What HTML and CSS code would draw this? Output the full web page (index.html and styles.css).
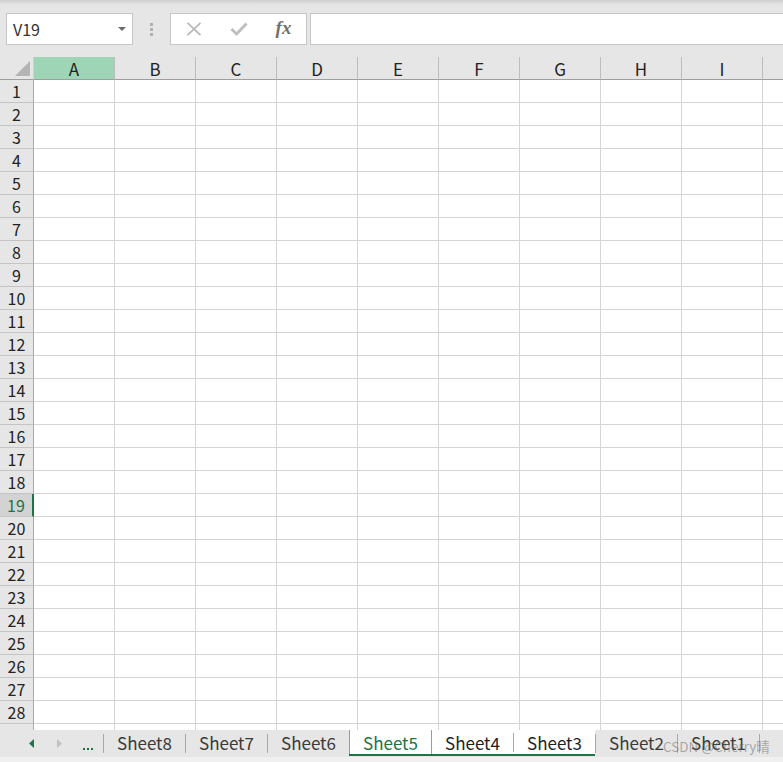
FILE: index.html
```html
<!DOCTYPE html>
<html>
<head>
<meta charset="utf-8">
<link rel="stylesheet" href="styles.css">
</head>
<body>
<div class="app">
  <div class="fbar">
    <div class="namebox"><span class="nb-text">V19</span><span class="nb-arrow"></span></div>
    <div class="grip"><i></i><i></i><i></i></div>
    <div class="controls">
      <span class="ctl"><svg width="16" height="14" viewBox="0 0 16 14"><path d="M1.5 0.8 L14.5 13.2 M14.5 0.8 L1.5 13.2" stroke="#b5b5b5" stroke-width="1.6" fill="none"/></svg></span>
      <span class="ctl"><svg width="18" height="14" viewBox="0 0 18 14"><path d="M1.5 7 L6.5 12 L16.5 1.5" stroke="#bdbdbd" stroke-width="2.8" fill="none"/></svg></span>
      <span class="ctl fx">fx</span>
    </div>
    <div class="finput"></div>
  </div>

  <div class="sheet">
    <div class="corner"><svg width="34" height="22" viewBox="0 0 34 22"><path d="M30 4 L30 19 L15 19 Z" fill="#b4b4b4"/></svg></div>
    <div class="ch sel">A</div><div class="ch">B</div><div class="ch">C</div><div class="ch">D</div><div class="ch">E</div><div class="ch">F</div><div class="ch">G</div><div class="ch">H</div><div class="ch">I</div><div class="ch"></div>

    <div class="rh">1</div><div class="c"></div><div class="c"></div><div class="c"></div><div class="c"></div><div class="c"></div><div class="c"></div><div class="c"></div><div class="c"></div><div class="c"></div><div class="c"></div>
    <div class="rh">2</div><div class="c"></div><div class="c"></div><div class="c"></div><div class="c"></div><div class="c"></div><div class="c"></div><div class="c"></div><div class="c"></div><div class="c"></div><div class="c"></div>
    <div class="rh">3</div><div class="c"></div><div class="c"></div><div class="c"></div><div class="c"></div><div class="c"></div><div class="c"></div><div class="c"></div><div class="c"></div><div class="c"></div><div class="c"></div>
    <div class="rh">4</div><div class="c"></div><div class="c"></div><div class="c"></div><div class="c"></div><div class="c"></div><div class="c"></div><div class="c"></div><div class="c"></div><div class="c"></div><div class="c"></div>
    <div class="rh">5</div><div class="c"></div><div class="c"></div><div class="c"></div><div class="c"></div><div class="c"></div><div class="c"></div><div class="c"></div><div class="c"></div><div class="c"></div><div class="c"></div>
    <div class="rh">6</div><div class="c"></div><div class="c"></div><div class="c"></div><div class="c"></div><div class="c"></div><div class="c"></div><div class="c"></div><div class="c"></div><div class="c"></div><div class="c"></div>
    <div class="rh">7</div><div class="c"></div><div class="c"></div><div class="c"></div><div class="c"></div><div class="c"></div><div class="c"></div><div class="c"></div><div class="c"></div><div class="c"></div><div class="c"></div>
    <div class="rh">8</div><div class="c"></div><div class="c"></div><div class="c"></div><div class="c"></div><div class="c"></div><div class="c"></div><div class="c"></div><div class="c"></div><div class="c"></div><div class="c"></div>
    <div class="rh">9</div><div class="c"></div><div class="c"></div><div class="c"></div><div class="c"></div><div class="c"></div><div class="c"></div><div class="c"></div><div class="c"></div><div class="c"></div><div class="c"></div>
    <div class="rh">10</div><div class="c"></div><div class="c"></div><div class="c"></div><div class="c"></div><div class="c"></div><div class="c"></div><div class="c"></div><div class="c"></div><div class="c"></div><div class="c"></div>
    <div class="rh">11</div><div class="c"></div><div class="c"></div><div class="c"></div><div class="c"></div><div class="c"></div><div class="c"></div><div class="c"></div><div class="c"></div><div class="c"></div><div class="c"></div>
    <div class="rh">12</div><div class="c"></div><div class="c"></div><div class="c"></div><div class="c"></div><div class="c"></div><div class="c"></div><div class="c"></div><div class="c"></div><div class="c"></div><div class="c"></div>
    <div class="rh">13</div><div class="c"></div><div class="c"></div><div class="c"></div><div class="c"></div><div class="c"></div><div class="c"></div><div class="c"></div><div class="c"></div><div class="c"></div><div class="c"></div>
    <div class="rh">14</div><div class="c"></div><div class="c"></div><div class="c"></div><div class="c"></div><div class="c"></div><div class="c"></div><div class="c"></div><div class="c"></div><div class="c"></div><div class="c"></div>
    <div class="rh">15</div><div class="c"></div><div class="c"></div><div class="c"></div><div class="c"></div><div class="c"></div><div class="c"></div><div class="c"></div><div class="c"></div><div class="c"></div><div class="c"></div>
    <div class="rh">16</div><div class="c"></div><div class="c"></div><div class="c"></div><div class="c"></div><div class="c"></div><div class="c"></div><div class="c"></div><div class="c"></div><div class="c"></div><div class="c"></div>
    <div class="rh">17</div><div class="c"></div><div class="c"></div><div class="c"></div><div class="c"></div><div class="c"></div><div class="c"></div><div class="c"></div><div class="c"></div><div class="c"></div><div class="c"></div>
    <div class="rh">18</div><div class="c"></div><div class="c"></div><div class="c"></div><div class="c"></div><div class="c"></div><div class="c"></div><div class="c"></div><div class="c"></div><div class="c"></div><div class="c"></div>
    <div class="rh rsel">19</div><div class="c"></div><div class="c"></div><div class="c"></div><div class="c"></div><div class="c"></div><div class="c"></div><div class="c"></div><div class="c"></div><div class="c"></div><div class="c"></div>
    <div class="rh">20</div><div class="c"></div><div class="c"></div><div class="c"></div><div class="c"></div><div class="c"></div><div class="c"></div><div class="c"></div><div class="c"></div><div class="c"></div><div class="c"></div>
    <div class="rh">21</div><div class="c"></div><div class="c"></div><div class="c"></div><div class="c"></div><div class="c"></div><div class="c"></div><div class="c"></div><div class="c"></div><div class="c"></div><div class="c"></div>
    <div class="rh">22</div><div class="c"></div><div class="c"></div><div class="c"></div><div class="c"></div><div class="c"></div><div class="c"></div><div class="c"></div><div class="c"></div><div class="c"></div><div class="c"></div>
    <div class="rh">23</div><div class="c"></div><div class="c"></div><div class="c"></div><div class="c"></div><div class="c"></div><div class="c"></div><div class="c"></div><div class="c"></div><div class="c"></div><div class="c"></div>
    <div class="rh">24</div><div class="c"></div><div class="c"></div><div class="c"></div><div class="c"></div><div class="c"></div><div class="c"></div><div class="c"></div><div class="c"></div><div class="c"></div><div class="c"></div>
    <div class="rh">25</div><div class="c"></div><div class="c"></div><div class="c"></div><div class="c"></div><div class="c"></div><div class="c"></div><div class="c"></div><div class="c"></div><div class="c"></div><div class="c"></div>
    <div class="rh">26</div><div class="c"></div><div class="c"></div><div class="c"></div><div class="c"></div><div class="c"></div><div class="c"></div><div class="c"></div><div class="c"></div><div class="c"></div><div class="c"></div>
    <div class="rh">27</div><div class="c"></div><div class="c"></div><div class="c"></div><div class="c"></div><div class="c"></div><div class="c"></div><div class="c"></div><div class="c"></div><div class="c"></div><div class="c"></div>
    <div class="rh">28</div><div class="c"></div><div class="c"></div><div class="c"></div><div class="c"></div><div class="c"></div><div class="c"></div><div class="c"></div><div class="c"></div><div class="c"></div><div class="c"></div>
    <div class="rh"></div><div class="c"></div><div class="c"></div><div class="c"></div><div class="c"></div><div class="c"></div><div class="c"></div><div class="c"></div><div class="c"></div><div class="c"></div><div class="c"></div>
  </div>

  <div class="tabbar">
    <div class="nav">
      <svg class="nav-l" width="5" height="9" viewBox="0 0 5 9"><path d="M5 0 L0 4.5 L5 9 Z" fill="#217346"/></svg>
      <svg class="nav-r" width="5" height="9" viewBox="0 0 5 9"><path d="M0 0 L5 4.5 L0 9 Z" fill="#c2c2c2"/></svg>
      <span class="more"><i></i><i></i><i></i></span>
    </div>
    <span class="sep"></span>
    <div class="tab">Sheet8</div><span class="sep"></span>
    <div class="tab">Sheet7</div><span class="sep"></span>
    <div class="tab">Sheet6</div>
    <div class="group">
      <div class="tab on active">Sheet5</div>
      <div class="tab on">Sheet4</div><span class="sep"></span>
      <div class="tab on">Sheet3</div>
    </div>
    <span class="sep"></span>
    <div class="tab">Sheet2</div><span class="sep"></span>
    <div class="tab">Sheet1</div><span class="sep"></span>
    <span class="watermark">CSDN @Cherry晴</span>
  </div>
  <div class="bottom"></div>
</div>
</body>
</html>
```

FILE: styles.css
```css
html, body {
  margin: 0;
  padding: 0;
  background: #e6e6e6;
}
.app {
  width: 783px;
  height: 762px;
  overflow: hidden;
  font-family: "Noto Sans CJK SC", "Noto Sans", sans-serif;
  color: #222;
  position: relative;
}
.fbar {
  height: 57px;
  box-sizing: border-box;
  padding: 13px 0 0 6px;
  display: flex;
  align-items: flex-start;
  background: linear-gradient(#cfcfcf 0px, #e2e2e2 4px, #e6e6e6 6px);
}
.namebox {
  width: 127px;
  height: 32px;
  box-sizing: border-box;
  border: 1px solid #c6c6c6;
  background: #fff;
  display: flex;
  align-items: center;
  padding-left: 6px;
}
.nb-text {
  font-size: 16px;
  color: #333;
  flex: 1;
  line-height: 1;
}
.nb-arrow {
  width: 0;
  height: 0;
  border-left: 4px solid transparent;
  border-right: 4px solid transparent;
  border-top: 4px solid #6a6a6a;
  margin-right: 6px;
}
.grip {
  width: 37px;
  height: 32px;
  display: flex;
  flex-direction: column;
  align-items: center;
  justify-content: center;
  gap: 2px;
}
.grip i {
  display: block;
  width: 3px;
  height: 3px;
  background: #b0b0b0;
}
.controls {
  width: 137px;
  height: 32px;
  box-sizing: border-box;
  border: 1px solid #c6c6c6;
  background: #fff;
  display: flex;
}
.ctl {
  width: 45px;
  display: flex;
  align-items: center;
  justify-content: center;
}
.fx {
  font-family: "Liberation Serif", "DejaVu Serif", serif;
  font-style: italic;
  font-weight: bold;
  font-size: 19px;
  color: #707070;
  padding-bottom: 2px;
}
.finput {
  margin-left: 3px;
  flex: 1;
  height: 32px;
  box-sizing: border-box;
  border: 1px solid #c6c6c6;
  border-right: none;
  background: #fff;
}
.sheet {
  height: 673px;
  overflow: hidden;
  display: grid;
  grid-template-columns: 34px repeat(10, 81px);
  grid-auto-rows: 23px;
  background: #fff;
}
.sheet > div {
  box-sizing: border-box;
}
.corner {
  background: #e6e6e6;
  border-bottom: 1px solid #9e9e9e;
  border-right: 1px solid #d0d0d0;
}
.corner svg {
  display: block;
}
.ch {
  background: #e6e6e6;
  border-right: 1px solid #bdbdbd;
  border-bottom: 1px solid #9e9e9e;
  display: flex;
  align-items: center;
  justify-content: center;
  font-size: 17px;
  line-height: 1;
  color: #222;
}
.ch.sel {
  background: #9fd5b7;
}
.rh {
  background: #e6e6e6;
  border-right: 1px solid #a8a8a8;
  border-bottom: 1px solid #c4c4c4;
  display: flex;
  align-items: center;
  justify-content: center;
  font-size: 16px;
  line-height: 1;
  color: #222;
}
.rh.rsel {
  background: #d3d3d3;
  color: #217346;
  border-right: 2px solid #217346;
}
.c {
  border-right: 1px solid #d4d4d4;
  border-bottom: 1px solid #d4d4d4;
}
.tabbar {
  height: 27px;
  display: flex;
  align-items: stretch;
  background: #e6e6e6;
  position: relative;
}
.nav {
  width: 103px;
  display: flex;
  align-items: center;
}
.nav-l {
  margin-left: 29px;
}
.nav-r {
  margin-left: 23px;
}
.more {
  margin-left: 21px;
  display: flex;
  gap: 2px;
  align-self: center;
  padding-top: 11px;
}
.more i {
  display: block;
  width: 2px;
  height: 2px;
  background: #217346;
}
.sep {
  width: 1px;
  background: #a8a8a8;
  margin: 4px 0 4px;
}
.tab {
  width: 81px;
  display: flex;
  align-items: center;
  justify-content: center;
  font-size: 17px;
  color: #3a3a3a;
  padding-bottom: 2px;
  box-sizing: border-box;
}
.group {
  display: flex;
  align-items: stretch;
  background: #fff;
  border-bottom: 2px solid #217346;
  margin-bottom: 1px;
}
.group .sep {
  margin: 3px 0 2px;
}
.tab.on {
  color: #1f1f1f;
  padding-bottom: 0;
}
.tab.active {
  width: 83px;
  border-left: 1px solid #9a9a9a;
  border-right: 1px solid #9a9a9a;
  color: #217346;
}
.watermark {
  position: absolute;
  left: 663px;
  top: 7px;
  font-size: 13.5px;
  color: rgba(110, 110, 110, 0.55);
  font-family: "Noto Sans CJK SC", "Noto Sans", sans-serif;
  line-height: 18px;
}
.bottom {
  height: 5px;
  background: #f0f0f0;
}
```
